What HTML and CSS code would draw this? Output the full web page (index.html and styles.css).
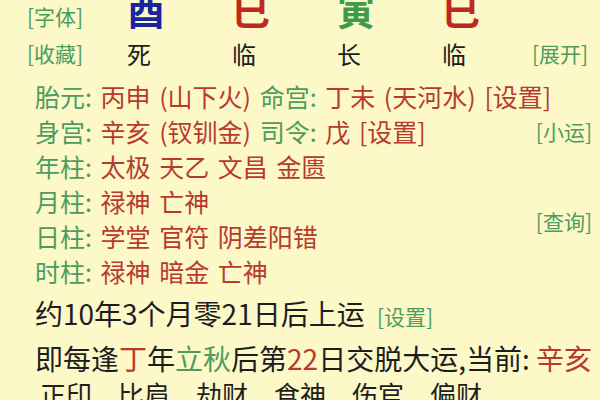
FILE: index.html
```html
<!DOCTYPE html>
<html lang="zh">

<head>
    <meta charset="UTF-8">
    <meta name="viewport" content="width=device-width, initial-scale=1.0">
    <title>排盘</title>
    <link rel="stylesheet" href="styles.css">
</head>

<body>
    <div class="top">
        <span class="link">[字体]</span>
        <span class="big blue">酉</span>
        <span class="big red">巳</span>
        <span class="big green">寅</span>
        <span class="big red">巳</span>
        <span></span>

        <span class="link">[收藏]</span>
        <span class="stage">死</span>
        <span class="stage">临</span>
        <span class="stage">长</span>
        <span class="stage">临</span>
        <span class="link">[展开]</span>
    </div>

    <div class="info">
        <div class="line wide">
            <span class="key">胎元:</span> <span class="val">丙申 (山下火)</span>
            <span class="key">命宫:</span> <span class="val">丁未 (天河水)</span>
            <span class="val">[设置]</span>
        </div>
        <div class="line">
            <span class="key">身宫:</span> <span class="val">辛亥 (钗钏金)</span>
            <span class="key">司令:</span> <span class="val">戊</span>
            <span class="val">[设置]</span>
        </div>
        <div class="line">
            <span class="key">年柱:</span> <span class="val">太极 天乙 文昌 金匮</span>
        </div>
        <div class="line">
            <span class="key">月柱:</span> <span class="val">禄神 亡神</span>
        </div>
        <div class="line">
            <span class="key">日柱:</span> <span class="val">学堂 官符 阴差阳错</span>
        </div>
        <div class="line">
            <span class="key">时柱:</span> <span class="val">禄神 暗金 亡神</span>
        </div>
        <div class="side link xiaoyun">[小运]</div>
        <div class="side link chaxun">[查询]</div>
    </div>

    <div class="yun first">约10年3个月零21日后上运 <span class="link small">[设置]</span></div>
    <div class="yun">即每逢<span class="val">丁</span>年<span class="key">立秋</span>后第<span class="val">22</span>日交脱大运,当前: <span class="val">辛亥</span></div>

    <div class="gods">
        <span>正印</span>
        <span>比肩</span>
        <span>劫财</span>
        <span>食神</span>
        <span>伤官</span>
        <span>偏财</span>
    </div>
</body>

</html>
```

FILE: styles.css
```css
* {
    padding: 0;
    margin: 0;
}

body {
    width: 600px;
    height: 400px;
    overflow: hidden;
    background: #fcf8c8;
    color: #1e1e1e;
    font-family: "Noto Sans CJK SC", "Noto Sans", sans-serif;
}

.link {
    color: #4c9c60;
    font-size: 21px;
}

.key {
    color: #4c9c60;
}

.val {
    color: #b83a2e;
}

.top {
    display: grid;
    grid-template-columns: 100px 105px 105px 105px 90px 68px;
    grid-template-rows: 36px 38px;
    align-items: center;
    padding-left: 27px;
    margin-top: -2px;
}

.big {
    font-size: 38px;
    font-weight: bold;
    line-height: 36px;
    margin-top: -14px;
}

.blue {
    color: #1a249e;
}

.red {
    color: #c0281f;
}

.green {
    color: #3f9a4e;
}

.stage {
    font-size: 24px;
}

.info {
    display: grid;
    grid-template-columns: 1fr auto;
    grid-auto-rows: 35px;
    align-items: center;
    padding: 6px 8px 0 35px;
    font-size: 25px;
    word-spacing: 3px;
}

.line {
    grid-column: 1;
    white-space: nowrap;
}

.wide {
    grid-column: 1 / 3;
}

.side {
    grid-column: 2;
}

.xiaoyun {
    grid-row: 2;
}

.chaxun {
    grid-row: 4 / 6;
    margin-top: 6px;
}

.yun {
    padding-left: 35px;
    font-size: 28px;
    line-height: 42px;
    white-space: nowrap;
}

.first {
    margin-top: 4px;
}

.small {
    font-size: 21px;
    margin-left: 6px;
}

.gods {
    display: flex;
    gap: 26px;
    padding-left: 40px;
    font-size: 26px;
    line-height: 30px;
}
```
